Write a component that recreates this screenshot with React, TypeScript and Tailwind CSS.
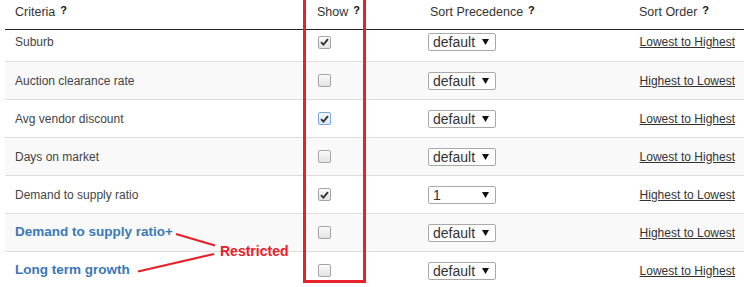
import React from 'react'

type Row = {
  label: string
  checked: boolean
  focus?: boolean
  precedence: string
  order: string
  restricted?: boolean
}

const rows: Row[] = [
  { label: 'Suburb', checked: true, precedence: 'default', order: 'Lowest to Highest' },
  { label: 'Auction clearance rate', checked: false, precedence: 'default', order: 'Highest to Lowest' },
  { label: 'Avg vendor discount', checked: true, focus: true, precedence: 'default', order: 'Lowest to Highest' },
  { label: 'Days on market', checked: false, precedence: 'default', order: 'Lowest to Highest' },
  { label: 'Demand to supply ratio', checked: true, precedence: '1', order: 'Highest to Lowest' },
  { label: 'Demand to supply ratio+', checked: false, precedence: 'default', order: 'Highest to Lowest', restricted: true },
  { label: 'Long term growth', checked: false, precedence: 'default', order: 'Lowest to Highest', restricted: true },
]

function Help() {
  return <sup className="relative -top-[2px] ml-[5px] text-[11px] font-bold text-[#111]">?</sup>
}

function Checkbox({ checked, focus }: { checked: boolean; focus?: boolean }) {
  return (
    <span
      className={`flex h-[13px] w-[13px] items-center justify-center rounded-[2px] border ${
        focus ? 'border-[#7aa7e6] bg-gradient-to-b from-[#f4f8fd] to-[#dfe8f3]' : 'border-[#a5a5a5] bg-gradient-to-b from-[#fafafa] to-[#e3e3e3]'
      }`}
    >
      {checked && (
        <svg width="9" height="8" viewBox="0 0 9 8">
          <path d="M1 4.2 L3.4 6.6 L8 1.2" fill="none" stroke="#333" strokeWidth="1.9" />
        </svg>
      )}
    </span>
  )
}

function Select({ value }: { value: string }) {
  return (
    <div className="flex h-[18px] w-[68px] items-center justify-between rounded-[2px] border border-[#a9a9a9] bg-white pl-[4px] pr-[6px] text-[14px] leading-none text-[#333]">
      <span>{value}</span>
      <svg width="7" height="6" viewBox="0 0 7 6">
        <path d="M0 0 H7 L3.5 6 Z" fill="#111" />
      </svg>
    </div>
  )
}

export default function App() {
  return (
    <div className="relative h-[287px] w-[744px] overflow-hidden bg-white" style={{ fontFamily: '"Liberation Sans", Arial, sans-serif' }}>
      <div className="ml-[5px]">
        {/* Header */}
        <div className="grid h-[30px] grid-cols-[302px_113px_209px_1fr] items-start border-b border-[#222] pt-[3px] text-[12.5px] text-[#333]">
          <div className="pl-[10px]">Criteria<Help /></div>
          <div className="pl-[10px]">Show<Help /></div>
          <div className="pl-[10px]">Sort Precedence<Help /></div>
          <div className="pl-[10px]">Sort Order<Help /></div>
        </div>

        {/* Rows */}
        {rows.map((row, i) => (
          <div
            key={i}
            className={`grid grid-cols-[302px_113px_209px_1fr] items-center border-b border-[#dddddd] ${
              i === 0 ? 'h-[32px] pb-[7px]' : 'h-[38px]'
            } ${i % 2 === 1 ? 'bg-[#f9f9f9]' : 'bg-white'}`}
          >
            <div
              className={`pl-[10px] ${
                row.restricted ? 'text-[13.5px] font-bold text-[#3a78b5]' : 'text-[12px] text-[#444]'
              }`}
            >
              {row.label}
            </div>
            <div className="pl-[11px]">
              <Checkbox checked={row.checked} focus={row.focus} />
            </div>
            <div className="pl-[8px]">
              <Select value={row.precedence} />
            </div>
            <div className="flex justify-end pr-[9px]">
              <a className="text-[12px] text-[#333] underline">{row.order}</a>
            </div>
          </div>
        ))}
      </div>

      {/* Annotations */}
      <div className="pointer-events-none absolute left-[303px] top-[-3px] h-[286px] w-[63px] border-[3px] border-[#e8202a]" />
      <svg className="pointer-events-none absolute left-0 top-0" width="744" height="287">
        <line x1="176" y1="234" x2="215" y2="245.5" stroke="#e8202a" strokeWidth="2.2" />
        <line x1="138" y1="271.5" x2="214" y2="254" stroke="#e8202a" strokeWidth="2.2" />
      </svg>
      <div className="absolute left-[220px] top-[241px] text-[14px] font-bold text-[#e8202a]">Restricted</div>
    </div>
  )
}
